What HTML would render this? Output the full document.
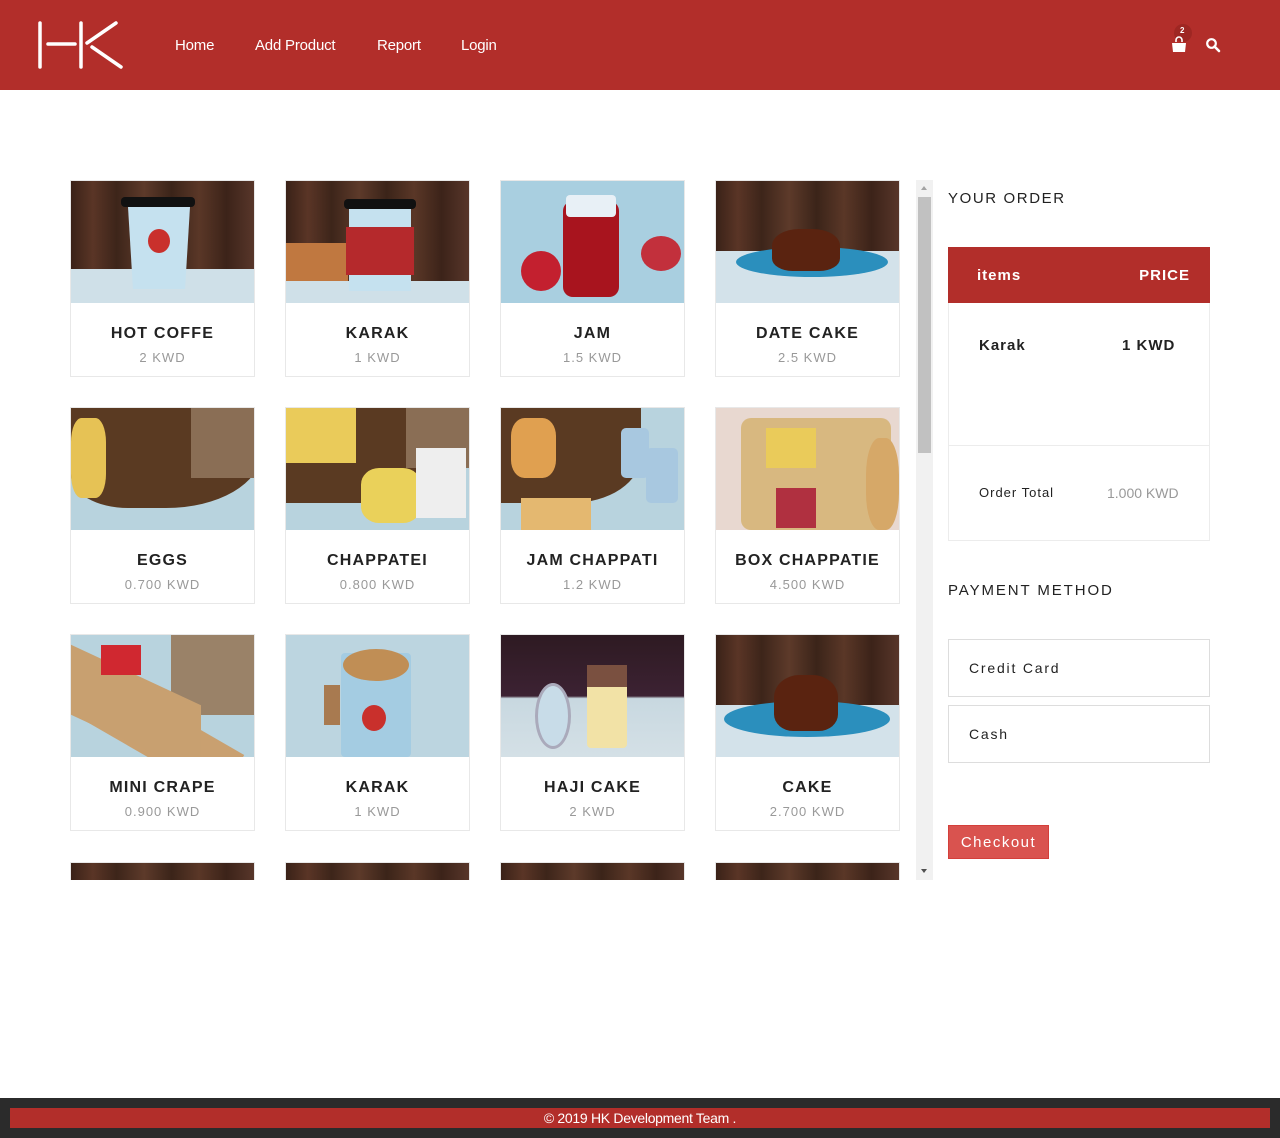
<!DOCTYPE html>
<html><head><meta charset="utf-8">
<style>
*{margin:0;padding:0;box-sizing:border-box}
body{width:1280px;height:1138px;position:relative;background:#fff;font-family:"Liberation Sans",sans-serif;overflow:hidden}
.hdr{position:absolute;left:0;top:0;width:1280px;height:90px;background:#b22e2a}
.nav a{position:absolute;top:37px;color:#fff;font-size:15px;text-decoration:none;letter-spacing:-0.2px}
.scroll{position:absolute;left:70px;top:180px;width:846px;height:700px;overflow:hidden}
.card{position:absolute;width:185px;height:197px;border:1px solid #e8e8e8;background:#fff}
.img{position:absolute;left:0;top:0;width:183px;height:122px;overflow:hidden}
.t{position:absolute;left:0;width:183px;top:144px;text-align:center;font-size:16px;font-weight:bold;letter-spacing:1.2px;color:#222}
.p{position:absolute;left:0;width:183px;top:169px;text-align:center;font-size:13px;letter-spacing:1px;color:#999}
.wood{background:linear-gradient(90deg,#3a2218 0%,#5a3526 12%,#3d251a 25%,#5d3a2a 40%,#3b2419 55%,#5a3727 70%,#3c2319 85%,#58362a 100%)}
.sb{position:absolute;left:916px;top:180px;width:17px;height:700px;background:#f1f1f1}
.h{position:absolute;left:948px;font-size:15px;letter-spacing:1.7px;color:#222}
.box{position:absolute;left:948px;width:262px;border:1px solid #ececec}
.pm{position:absolute;left:948px;width:262px;height:58px;border:1px solid #ddd;font-size:14px;letter-spacing:1.8px;color:#222;padding:20px 0 0 20px}
</style></head><body>
<div class="hdr">
<svg style="position:absolute;left:36px;top:20px" width="90" height="50" viewBox="0 0 90 50">
<g stroke="#fff" stroke-width="3.5" stroke-linecap="round" fill="none">
<line x1="4" y1="3" x2="4" y2="47"/><line x1="12" y1="24" x2="39" y2="24"/><line x1="45" y1="3" x2="45" y2="47"/>
<line x1="51" y1="23" x2="80" y2="3"/><line x1="56" y1="27" x2="85" y2="47"/></g></svg>
<div class="nav"><a style="left:175px">Home</a><a style="left:255px">Add Product</a><a style="left:377px">Report</a><a style="left:461px">Login</a></div>
<div style="position:absolute;left:1174px;top:24px;width:18px;height:18px;border-radius:50%;background:#9e2723"></div>
<div style="position:absolute;left:1180px;top:26px;color:#fff;font-size:8px;font-weight:bold">2</div>
<svg style="position:absolute;left:1170px;top:36px" width="18" height="18" viewBox="0 0 18 18"><path d="M6 6V4a3 3 0 0 1 6 0v2" stroke="#fff" stroke-width="1.6" fill="none"/><path d="M2 7h14l-1 9H3z" fill="#fff"/></svg>
<svg style="position:absolute;left:1205px;top:37px" width="16" height="16" viewBox="0 0 16 16"><circle cx="6.5" cy="6.5" r="4.3" stroke="#fff" stroke-width="2.2" fill="none"/><line x1="9.5" y1="9.5" x2="14" y2="14" stroke="#fff" stroke-width="2.6" stroke-linecap="round"/></svg>
</div>

<div class="scroll">
<div class="card" style="left:0;top:0"><div class="img wood"><div style="position:absolute;left:0;top:88px;width:183px;height:34px;background:#cfe0e8"></div><div style="position:absolute;left:50px;top:16px;width:74px;height:10px;background:#111;border-radius:4px"></div><div style="position:absolute;left:57px;top:26px;width:62px;height:82px;background:#c5e1ef;clip-path:polygon(0 0,100% 0,92% 100%,8% 100%)"></div><div style="position:absolute;left:77px;top:48px;width:22px;height:24px;border-radius:50%;background:#c9302c"></div></div><div class="t">HOT COFFE</div><div class="p">2 KWD</div></div>
<div class="card" style="left:215px;top:0"><div class="img wood"><div style="position:absolute;left:0;top:100px;width:183px;height:22px;background:#cfe0e8"></div><div style="position:absolute;left:0;top:62px;width:62px;height:38px;background:#c07840"></div><div style="position:absolute;left:58px;top:18px;width:72px;height:10px;background:#111;border-radius:4px"></div><div style="position:absolute;left:63px;top:28px;width:62px;height:82px;background:#c5e1ef"></div><div style="position:absolute;left:60px;top:46px;width:68px;height:48px;background:#b5292c"></div></div><div class="t">KARAK</div><div class="p">1 KWD</div></div>
<div class="card" style="left:430px;top:0"><div class="img" style="background:#a9cfe0"><div style="position:absolute;left:20px;top:70px;width:40px;height:40px;border-radius:50%;background:#c3202f"></div><div style="position:absolute;left:140px;top:55px;width:40px;height:35px;border-radius:50%;background:#c2303c"></div><div style="position:absolute;left:62px;top:20px;width:56px;height:96px;border-radius:10px;background:#a8141e"></div><div style="position:absolute;left:65px;top:14px;width:50px;height:22px;background:#e8f0f6;border-radius:4px"></div></div><div class="t">JAM</div><div class="p">1.5 KWD</div></div>
<div class="card" style="left:645px;top:0"><div class="img wood"><div style="position:absolute;left:0;top:70px;width:183px;height:52px;background:#d3e2ea"></div><div style="position:absolute;left:20px;top:66px;width:152px;height:30px;border-radius:50%;background:#2b8fbd"></div><div style="position:absolute;left:56px;top:48px;width:68px;height:42px;border-radius:40% 40% 30% 30%;background:#5a2310"></div></div><div class="t">DATE CAKE</div><div class="p">2.5 KWD</div></div>
<div class="card" style="left:0;top:227px"><div class="img" style="background:#b8d3de"><div style="position:absolute;left:0;top:-10px;width:190px;height:110px;border-radius:0 0 50% 30%;background:#5a3a22"></div><div style="position:absolute;left:120px;top:0;width:70px;height:70px;background:#8a6e55"></div><div style="position:absolute;left:0;top:10px;width:35px;height:80px;background:#e6c255;border-radius:30%"></div></div><div class="t">EGGS</div><div class="p">0.700 KWD</div></div>
<div class="card" style="left:215px;top:227px"><div class="img" style="background:#b8d3de"><div style="position:absolute;left:0;top:0;width:150px;height:95px;border-radius:0 0 50% 0;background:#5a3a22"></div><div style="position:absolute;left:120px;top:0;width:63px;height:60px;background:#8a6e55"></div><div style="position:absolute;left:0;top:0;width:70px;height:55px;background:#eacb5a"></div><div style="position:absolute;left:75px;top:60px;width:60px;height:55px;background:#ead15a;border-radius:30%"></div><div style="position:absolute;left:130px;top:40px;width:50px;height:70px;background:#eee"></div></div><div class="t">CHAPPATEI</div><div class="p">0.800 KWD</div></div>
<div class="card" style="left:430px;top:227px"><div class="img" style="background:#b8d3de"><div style="position:absolute;left:0;top:0;width:140px;height:95px;border-radius:0 0 50% 0;background:#5a3a22"></div><div style="position:absolute;left:10px;top:10px;width:45px;height:60px;background:#e0a050;border-radius:30%"></div><div style="position:absolute;left:120px;top:20px;width:28px;height:50px;background:#a8c8e0;border-radius:5px"></div><div style="position:absolute;left:145px;top:40px;width:32px;height:55px;background:#a8c8e0;border-radius:5px"></div><div style="position:absolute;left:20px;top:90px;width:70px;height:32px;background:#e4b870"></div></div><div class="t">JAM CHAPPATI</div><div class="p">1.2 KWD</div></div>
<div class="card" style="left:645px;top:227px"><div class="img" style="background:#e8d8d0"><div style="position:absolute;left:25px;top:10px;width:150px;height:112px;background:#d8b880;border-radius:10px"></div><div style="position:absolute;left:50px;top:20px;width:50px;height:40px;background:#eacb5a"></div><div style="position:absolute;left:60px;top:80px;width:40px;height:40px;background:#b03040"></div><div style="position:absolute;left:150px;top:30px;width:33px;height:92px;background:#d6a868;border-radius:40%"></div></div><div class="t">BOX CHAPPATIE</div><div class="p">4.500 KWD</div></div>
<div class="card" style="left:0;top:454px"><div class="img" style="background:#b8d3de"><div style="position:absolute;left:100px;top:0;width:83px;height:80px;background:#9a8268"></div><div style="position:absolute;left:0;top:20px;width:200px;height:50px;background:#c9a070;transform:rotate(30deg);transform-origin:0 0"></div><div style="position:absolute;left:0;top:40px;width:130px;height:70px;background:#c8a070;transform:skewY(25deg)"></div><div style="position:absolute;left:30px;top:10px;width:40px;height:30px;background:#d02830"></div></div><div class="t">MINI CRAPE</div><div class="p">0.900 KWD</div></div>
<div class="card" style="left:215px;top:454px"><div class="img" style="background:#bcd5e0"><div style="position:absolute;left:55px;top:18px;width:70px;height:104px;background:#a4cce2;border-radius:4px"></div><div style="position:absolute;left:57px;top:14px;width:66px;height:32px;border-radius:50%;background:#c08e55"></div><div style="position:absolute;left:76px;top:70px;width:24px;height:26px;border-radius:50%;background:#c9302c"></div><div style="position:absolute;left:38px;top:50px;width:16px;height:40px;background:#a87a50"></div></div><div class="t">KARAK</div><div class="p">1 KWD</div></div>
<div class="card" style="left:430px;top:454px"><div class="img" style="background:linear-gradient(#2e1a22 0%,#3c2233 50%,#c8d8e0 52%,#d4e0e6 100%)"><div style="position:absolute;left:86px;top:35px;width:40px;height:78px;background:#f2e2a6;border-radius:4px"></div><div style="position:absolute;left:86px;top:30px;width:40px;height:22px;background:#7a5040"></div><div style="position:absolute;left:34px;top:48px;width:36px;height:66px;border-radius:50%;background:#c8dce8;border:3px solid #aab"></div></div><div class="t">HAJI CAKE</div><div class="p">2 KWD</div></div>
<div class="card" style="left:645px;top:454px"><div class="img wood"><div style="position:absolute;left:0;top:70px;width:183px;height:52px;background:#d3e2ea"></div><div style="position:absolute;left:8px;top:66px;width:166px;height:36px;border-radius:50%;background:#2b8fbd"></div><div style="position:absolute;left:58px;top:40px;width:64px;height:56px;border-radius:40% 40% 30% 30%;background:#5a2310"></div></div><div class="t">CAKE</div><div class="p">2.700 KWD</div></div>
<div class="card" style="left:0;top:682px"><div class="img wood"></div></div>
<div class="card" style="left:215px;top:682px"><div class="img wood"></div></div>
<div class="card" style="left:430px;top:682px"><div class="img wood"></div></div>
<div class="card" style="left:645px;top:682px"><div class="img wood"></div></div>
</div>

<div class="sb"><div style="position:absolute;left:2px;top:17px;width:13px;height:256px;background:#c1c1c1"></div>
<div style="position:absolute;left:5px;top:6px;border:3.5px solid transparent;border-bottom:4px solid #a3a3a3;border-top:0"></div>
<div style="position:absolute;left:5px;top:689px;border:3.5px solid transparent;border-top:4px solid #505050;border-bottom:0"></div></div>

<div class="h" style="top:190px;letter-spacing:1.6px">YOUR ORDER</div>
<div style="position:absolute;left:948px;top:247px;width:262px;height:56px;background:#b22e2a;color:#fff;font-weight:bold;font-size:15px;letter-spacing:1px">
<span style="position:absolute;left:29px;top:20px">items</span><span style="position:absolute;right:20px;top:20px">PRICE</span></div>
<div class="box" style="top:303px;height:143px;border-top:0"><span style="position:absolute;left:30px;top:34px;font-size:15px;font-weight:bold;letter-spacing:1px;color:#222">Karak</span><span style="position:absolute;left:173px;top:34px;font-size:15px;font-weight:bold;letter-spacing:1px;color:#222">1 KWD</span></div>
<div class="box" style="top:445px;height:96px"><span style="position:absolute;left:30px;top:39px;font-size:13px;letter-spacing:1px;color:#222">Order Total</span><span style="position:absolute;left:158px;top:39px;font-size:14px;color:#999">1.000 KWD</span></div>

<div class="h" style="top:582px;letter-spacing:1.9px">PAYMENT METHOD</div>
<div class="pm" style="top:639px">Credit Card</div>
<div class="pm" style="top:705px">Cash</div>
<div style="position:absolute;left:948px;top:825px;width:101px;height:34px;background:#d9534f;border:1px solid #d43f3a;color:#fff;font-size:15px;letter-spacing:1.5px;text-align:center;line-height:33px">Checkout</div>

<div style="position:absolute;left:0;top:1098px;width:1280px;height:40px;background:#2b2b2b"></div>
<div style="position:absolute;left:10px;top:1108px;width:1260px;height:20px;background:#b22e2a;color:#fff;font-size:14px;text-align:center;line-height:20px;letter-spacing:-0.3px">© 2019 HK Development Team .</div>
</body></html>
